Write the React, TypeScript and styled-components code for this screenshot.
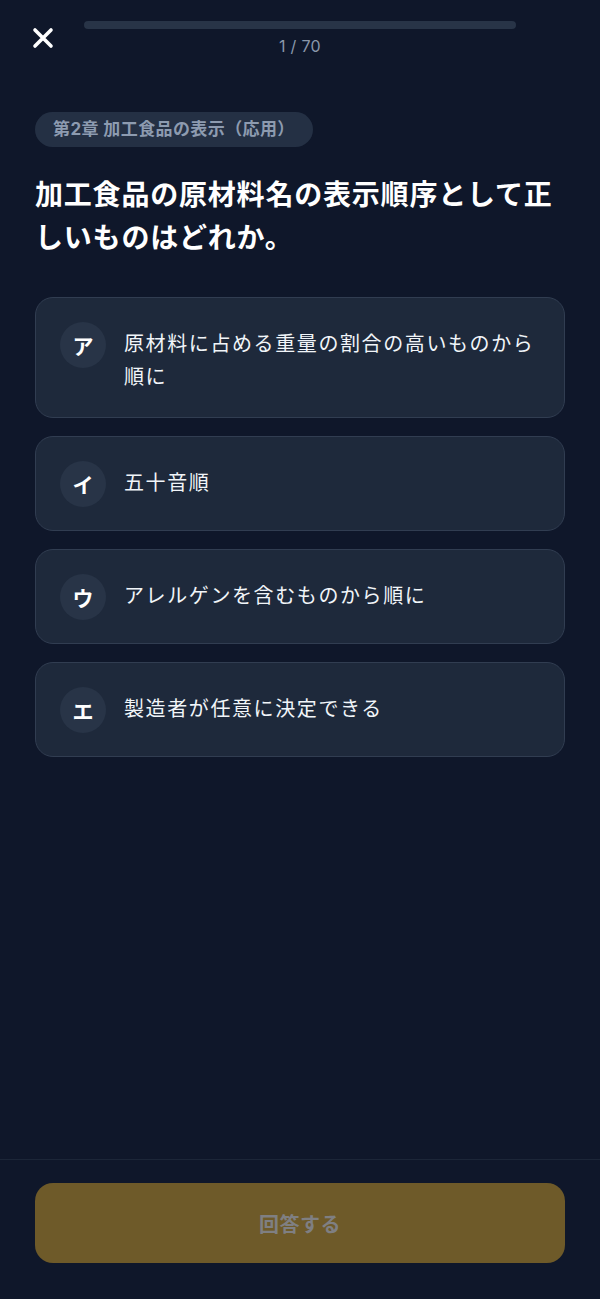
import React from "react";
import styled, { createGlobalStyle } from "styled-components";

const GlobalStyle = createGlobalStyle`
  html, body {
    margin: 0;
    padding: 0;
    background: #0f172a;
  }
  body {
    font-family: Inter, "Noto Sans CJK JP", sans-serif;
    -webkit-font-smoothing: antialiased;
  }
  * { box-sizing: border-box; }
`;

const Page = styled.div`
  min-height: 100vh;
  display: flex;
  flex-direction: column;
  background: #0f172a;
  color: #ffffff;
`;

const Header = styled.header`
  display: grid;
  grid-template-columns: 46px 1fr 46px;
  column-gap: 18px;
  align-items: start;
  padding: 21px 20px 0;
`;

const CloseButton = styled.button`
  width: 46px;
  height: 34px;
  padding: 0;
  border: none;
  background: transparent;
  display: flex;
  align-items: center;
  justify-content: center;
  cursor: pointer;
`;

const ProgressColumn = styled.div`
  display: flex;
  flex-direction: column;
  align-items: center;
`;

const Track = styled.div`
  width: 100%;
  height: 8px;
  border-radius: 4px;
  background: #283447;
  overflow: hidden;
`;

const Fill = styled.div`
  height: 100%;
  background: #eab308;
  border-radius: 4px;
`;

const Counter = styled.div`
  margin-top: 8px;
  font-size: 16px;
  line-height: 18px;
  color: #8a97aa;
  letter-spacing: 0.3px;
`;

const Main = styled.main`
  flex: 1;
  padding: 57px 35px 24px;
  display: flex;
  flex-direction: column;
  align-items: flex-start;
`;

const Chip = styled.div`
  padding: 6px 18px;
  border-radius: 999px;
  background: #243044;
  color: #8d9bb0;
  font-size: 17px;
  line-height: 23px;
  font-weight: 700;
  letter-spacing: 0.4px;
`;

const Question = styled.h1`
  margin: 27px 0 0;
  font-size: 28px;
  line-height: 43px;
  font-weight: 700;
  letter-spacing: 0.8px;
  color: #ffffff;
`;

const OptionList = styled.div`
  margin-top: 37px;
  width: 100%;
  display: flex;
  flex-direction: column;
  gap: 18px;
`;

const OptionCard = styled.button<{ $selected?: boolean }>`
  width: 100%;
  display: flex;
  align-items: flex-start;
  gap: 18px;
  padding: 24px 24px 23px;
  border-radius: 18px;
  border: 1px solid ${(p) => (p.$selected ? "#eab308" : "#313d51")};
  background: #1e293b;
  text-align: left;
  font-family: inherit;
  cursor: pointer;
`;

const Badge = styled.span`
  flex: 0 0 46px;
  width: 46px;
  height: 46px;
  border-radius: 50%;
  background: #283447;
  color: #ffffff;
  display: flex;
  align-items: center;
  justify-content: center;
  font-size: 21px;
  font-weight: 700;
`;

const OptionText = styled.span`
  padding-top: 6px;
  flex: 1;
  font-size: 20px;
  line-height: 33px;
  letter-spacing: 1.6px;
  color: #f1f5f9;
`;

const Footer = styled.footer`
  border-top: 1px solid #1c2638;
  padding: 23px 35px 36px;
`;

const SubmitButton = styled.button`
  width: 100%;
  height: 80px;
  border: none;
  border-radius: 18px;
  background: #6e5a29;
  color: #7f7f82;
  font-family: inherit;
  font-size: 20px;
  font-weight: 700;
  letter-spacing: 0.5px;
  cursor: not-allowed;
`;

const options = [
  { label: "ア", text: "原材料に占める重量の割合の高いものから順に" },
  { label: "イ", text: "五十音順" },
  { label: "ウ", text: "アレルゲンを含むものから順に" },
  { label: "エ", text: "製造者が任意に決定できる" },
];

const CloseIcon = () => (
  <svg width="22" height="22" viewBox="0 0 22 22" fill="none">
    <path
      d="M3 3 L19 19 M19 3 L3 19"
      stroke="#ffffff"
      strokeWidth="3.6"
      strokeLinecap="round"
    />
  </svg>
);

export default function App() {
  const current = 1;
  const total = 70;
  return (
    <Page>
      <GlobalStyle />
      <Header>
        <CloseButton aria-label="閉じる">
          <CloseIcon />
        </CloseButton>
        <ProgressColumn>
          <Track>
            <Fill style={{ width: `${((current - 1) / total) * 100}%` }} />
          </Track>
          <Counter>
            {current} / {total}
          </Counter>
        </ProgressColumn>
        <div />
      </Header>
      <Main>
        <Chip>第2章 加工食品の表示（応用）</Chip>
        <Question>加工食品の原材料名の表示順序として正しいものはどれか。</Question>
        <OptionList>
          {options.map((o) => (
            <OptionCard key={o.label}>
              <Badge>{o.label}</Badge>
              <OptionText>{o.text}</OptionText>
            </OptionCard>
          ))}
        </OptionList>
      </Main>
      <Footer>
        <SubmitButton disabled>回答する</SubmitButton>
      </Footer>
    </Page>
  );
}
